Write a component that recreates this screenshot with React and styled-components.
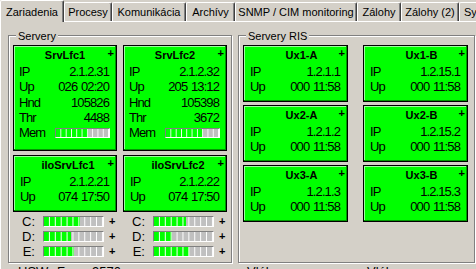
import React from "react";
import styled, { createGlobalStyle } from "styled-components";

const Global = createGlobalStyle`
  html, body { margin: 0; padding: 0; background: #d4d0c8; overflow: hidden; }
  body { font-family: "Liberation Sans", Arial, sans-serif; color: #000; }
`;

const Root = styled.div`
  width: 476px;
  height: 269px;
  overflow: hidden;
  background: #d4d0c8;
`;

const TabStrip = styled.div`
  display: flex;
  align-items: flex-end;
  height: 21px;
  position: relative;
  z-index: 1;
`;

const Tab = styled.div`
  box-sizing: border-box;
  flex: none;
  width: ${(p) => p.$w}px;
  height: ${(p) => (p.$active ? 22 : 19)}px;
  margin-bottom: ${(p) => (p.$active ? -1 : 0)}px;
  background: #d4d0c8;
  border-top: 1px solid #fff;
  border-left: 1px solid #fff;
  border-right: 1px solid #404040;
  box-shadow: inset -1px 0 #808080;
  border-top-left-radius: 2px;
  border-top-right-radius: 2px;
  font-size: 11px;
  display: flex;
  align-items: center;
  justify-content: ${(p) => (p.$clip ? "flex-start" : "center")};
  padding-left: ${(p) => (p.$clip ? 4 : 0)}px;
  white-space: nowrap;
  overflow: hidden;
`;

const Panel = styled.div`
  box-sizing: border-box;
  height: 248px;
  border-top: 1px solid #fff;
  border-left: 1px solid #fff;
  padding: 13px 0 0 7px;
  display: flex;
  flex-direction: column;
`;

const Groups = styled.div`
  display: flex;
  gap: 6px;
  align-items: flex-start;
`;

const Group = styled.div`
  position: relative;
  box-sizing: border-box;
  width: ${(p) => p.$w}px;
  height: 228px;
  border: 1px solid #808080;
  box-shadow: inset 1px 1px #fff, 1px 1px #fff;
  padding: 9px 0 0 4px;
`;

const GroupLabel = styled.span`
  position: absolute;
  top: -7px;
  left: 7px;
  padding: 0 2px;
  background: #d4d0c8;
  font-size: 11px;
  line-height: 14px;
`;

const ServerGrid = styled.div`
  display: flex;
  gap: 6px;
`;

const Column = styled.div`
  display: flex;
  flex-direction: column;
  gap: 4px;
  width: 104px;
`;

const RisGrid = styled.div`
  display: grid;
  grid-template-columns: 105px 105px;
  column-gap: 15px;
  row-gap: 3px;
`;

const Card = styled.div`
  position: relative;
  box-sizing: border-box;
  height: ${(p) => p.$h}px;
  background: #00ff00;
  border: 1px solid #000;
  box-shadow: inset -1px -1px #009a00, inset 1px 1px #9cff9c;
`;

const CardTitle = styled.div`
  font-weight: bold;
  font-size: 11px;
  line-height: 18px;
  text-align: center;
  padding-left: ${(p) => p.$shift * 2}px;
`;

const Plus = styled.span`
  position: absolute;
  top: 2px;
  right: 2px;
  font-weight: bold;
  font-size: 11px;
  line-height: 10px;
`;

const Row = styled.div`
  display: flex;
  justify-content: space-between;
  align-items: center;
  height: 15.3px;
  padding: 0 7px 0 ${(p) => p.$pl}px;
  font-size: 13px;
  letter-spacing: -0.9px;
  word-spacing: 1px;
  white-space: nowrap;
`;

const Meter = styled.div`
  position: relative;
  box-sizing: border-box;
  flex: none;
  width: ${(p) => p.$w}px;
  height: ${(p) => p.$h}px;
  margin-right: ${(p) => p.$mr || 0}px;
  background: #c0c0c0;
  border-top: 1px solid #808080;
  border-left: 1px solid #808080;
  border-bottom: 1px solid #fff;
  border-right: 1px solid #fff;
  &::after {
    content: "";
    position: absolute;
    inset: 0;
    background-image: linear-gradient(
      to right,
      transparent calc(100% - 1px),
      #fff calc(100% - 1px)
    );
    background-size: 10% 100%;
  }
`;

const MeterFill = styled.div`
  height: 100%;
  background: #00ff00;
`;

const DiskList = styled.div`
  display: flex;
  flex-direction: column;
  gap: 4px;
`;

const DiskRow = styled.div`
  display: flex;
  align-items: center;
  height: 11px;
  font-size: 13px;
  line-height: 11px;
`;

const DiskLabel = styled.span`
  width: 22px;
  text-align: right;
  margin-right: 8px;
`;

const DiskPlus = styled.span`
  margin-left: 5px;
  font-weight: bold;
  font-size: 11px;
`;

const Footer = styled.div`
  display: grid;
  grid-template-columns: 39px 35px 155px 120px auto;
  margin-top: 1px;
  padding-left: 10px;
  font-size: 13px;
  line-height: 15px;
  white-space: nowrap;
`;

const Bar = ({ pct, w, h, mr }) => (
  <Meter $w={w} $h={h} $mr={mr}>
    <MeterFill style={{ width: `${pct}%` }} />
  </Meter>
);

const tabs = [
  { t: "Zariadenia", w: 64, active: true },
  { t: "Procesy", w: 48 },
  { t: "Komunikácia", w: 74 },
  { t: "Archívy", w: 49 },
  { t: "SNMP / CIM monitoring", w: 122 },
  { t: "Zálohy", w: 44 },
  { t: "Zálohy (2)", w: 58 },
  { t: "Sy", w: 30, clip: true },
];

const servers = [
  {
    name: "SrvLfc1",
    rows: [["IP", "2.1.2.31"], ["Up", "026 02:20"], ["Hnd", "105826"], ["Thr", "4488"]],
    mem: 60,
    ilo: { name: "iloSrvLfc1", ip: "2.1.2.21", up: "074 17:50" },
    disks: [["C:", 61], ["D:", 45], ["E:", 51]],
  },
  {
    name: "SrvLfc2",
    rows: [["IP", "2.1.2.32"], ["Up", "205 13:12"], ["Hnd", "105398"], ["Thr", "3672"]],
    mem: 70,
    ilo: { name: "iloSrvLfc2", ip: "2.1.2.22", up: "074 17:50" },
    disks: [["C:", 55], ["D:", 30], ["E:", 59]],
  },
];

const ris = [
  ["Ux1-A", "1.2.1.1"],
  ["Ux1-B", "1.2.15.1"],
  ["Ux2-A", "1.2.1.2"],
  ["Ux2-B", "1.2.15.2"],
  ["Ux3-A", "1.2.1.3"],
  ["Ux3-B", "1.2.15.3"],
];

export default function App() {
  return (
    <Root>
      <Global />
      <TabStrip>
        {tabs.map((t) => (
          <Tab key={t.t} $w={t.w} $active={t.active} $clip={t.clip}>
            {t.t}
          </Tab>
        ))}
      </TabStrip>
      <Panel>
        <Groups>
          <Group $w={224}>
            <GroupLabel>Servery</GroupLabel>
            <ServerGrid>
              {servers.map((s) => (
                <Column key={s.name}>
                  <Card $h={106}>
                    <CardTitle $shift={0}>{s.name}</CardTitle>
                    <Plus>+</Plus>
                    {s.rows.map(([k, v]) => (
                      <Row key={k} $pl={5}>
                        <span>{k}</span>
                        <span>{v}</span>
                      </Row>
                    ))}
                    <Row $pl={5}>
                      <span>Mem</span>
                      <Bar pct={s.mem} w={55} h={10} mr={-1} />
                    </Row>
                  </Card>
                  <Card $h={57}>
                    <CardTitle $shift={3}>{s.ilo.name}</CardTitle>
                    <Plus>+</Plus>
                    <Row $pl={6}>
                      <span>IP</span>
                      <span>{s.ilo.ip}</span>
                    </Row>
                    <Row $pl={6}>
                      <span>Up</span>
                      <span>{s.ilo.up}</span>
                    </Row>
                  </Card>
                  <DiskList>
                    {s.disks.map(([d, p]) => (
                      <DiskRow key={d}>
                        <DiskLabel>{d}</DiskLabel>
                        <Bar pct={p} w={61} h={11} />
                        <DiskPlus>+</DiskPlus>
                      </DiskRow>
                    ))}
                  </DiskList>
                </Column>
              ))}
            </ServerGrid>
          </Group>
          <Group $w={237}>
            <GroupLabel>Servery RIS</GroupLabel>
            <RisGrid>
              {ris.map(([n, ip]) => (
                <Card key={n} $h={57}>
                  <CardTitle $shift={6}>{n}</CardTitle>
                  <Plus>+</Plus>
                  <Row $pl={6}>
                    <span>IP</span>
                    <span>{ip}</span>
                  </Row>
                  <Row $pl={6}>
                    <span>Up</span>
                    <span>000 11:58</span>
                  </Row>
                </Card>
              ))}
            </RisGrid>
          </Group>
        </Groups>
        <Footer>
          <span>HSW</span>
          <span>Free</span>
          <span>9570</span>
          <span>Vlákna</span>
          <span>Vlákna</span>
        </Footer>
      </Panel>
    </Root>
  );
}
